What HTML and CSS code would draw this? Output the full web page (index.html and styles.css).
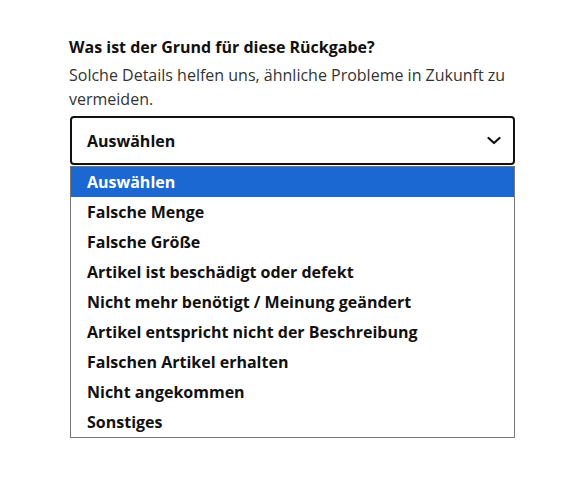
FILE: index.html
```html
<!DOCTYPE html>
<html lang="de">
<head>
<meta charset="utf-8">
<link rel="stylesheet" href="styles.css">
</head>
<body>
<div class="field">
  <div class="label">Was ist der Grund für diese Rückgabe?</div>
  <div class="hint">Solche Details helfen uns, ähnliche Probleme in Zukunft zu vermeiden.</div>
  <div class="select">
    <span class="value">Auswählen</span>
    <svg class="chevron" width="14" height="9" viewBox="0 0 14 9"><path d="M1.5 2 L7 7 L12.5 2" fill="none" stroke="#111" stroke-width="2.2" stroke-linecap="round" stroke-linejoin="round"/></svg>
  </div>
  <div class="listbox">
    <div class="option selected">Auswählen</div>
    <div class="option">Falsche Menge</div>
    <div class="option">Falsche Größe</div>
    <div class="option">Artikel ist beschädigt oder defekt</div>
    <div class="option">Nicht mehr benötigt / Meinung geändert</div>
    <div class="option">Artikel entspricht nicht der Beschreibung</div>
    <div class="option">Falschen Artikel erhalten</div>
    <div class="option">Nicht angekommen</div>
    <div class="option">Sonstiges</div>
  </div>
</div>
</body>
</html>
```
FILE: styles.css
```css
html, body {
  margin: 0;
  padding: 0;
  background: #fff;
}
body {
  font-family: "Open Sans", "Noto Sans", "Liberation Sans", sans-serif;
  color: #111;
}
.field {
  width: 445px;
  padding: 35px 0 0 70px;
}
.label {
  font-size: 16px;
  font-weight: 700;
  line-height: 24px;
  color: #111;
  margin-left: -1px;
  margin-bottom: 4px;
}
.hint {
  font-size: 16px;
  line-height: 24px;
  color: #333;
  margin-left: -1px;
}
.select {
  box-sizing: border-box;
  margin-top: 5px;
  height: 49px;
  border: 2px solid #111;
  border-radius: 4px;
  display: flex;
  align-items: center;
  justify-content: space-between;
  padding: 0 12px 0 15px;
  font-size: 16px;
  font-weight: 700;
}
.chevron {
  display: block;
}
.listbox {
  margin-top: 1px;
  box-sizing: border-box;
  border: 1px solid #767676;
  background: #fff;
}
.option {
  height: 30px;
  line-height: 30px;
  padding-left: 16px;
  font-size: 16px;
  font-weight: 700;
  color: #111;
}
.option.selected {
  background: #1b68d3;
  color: #fff;
}
```
